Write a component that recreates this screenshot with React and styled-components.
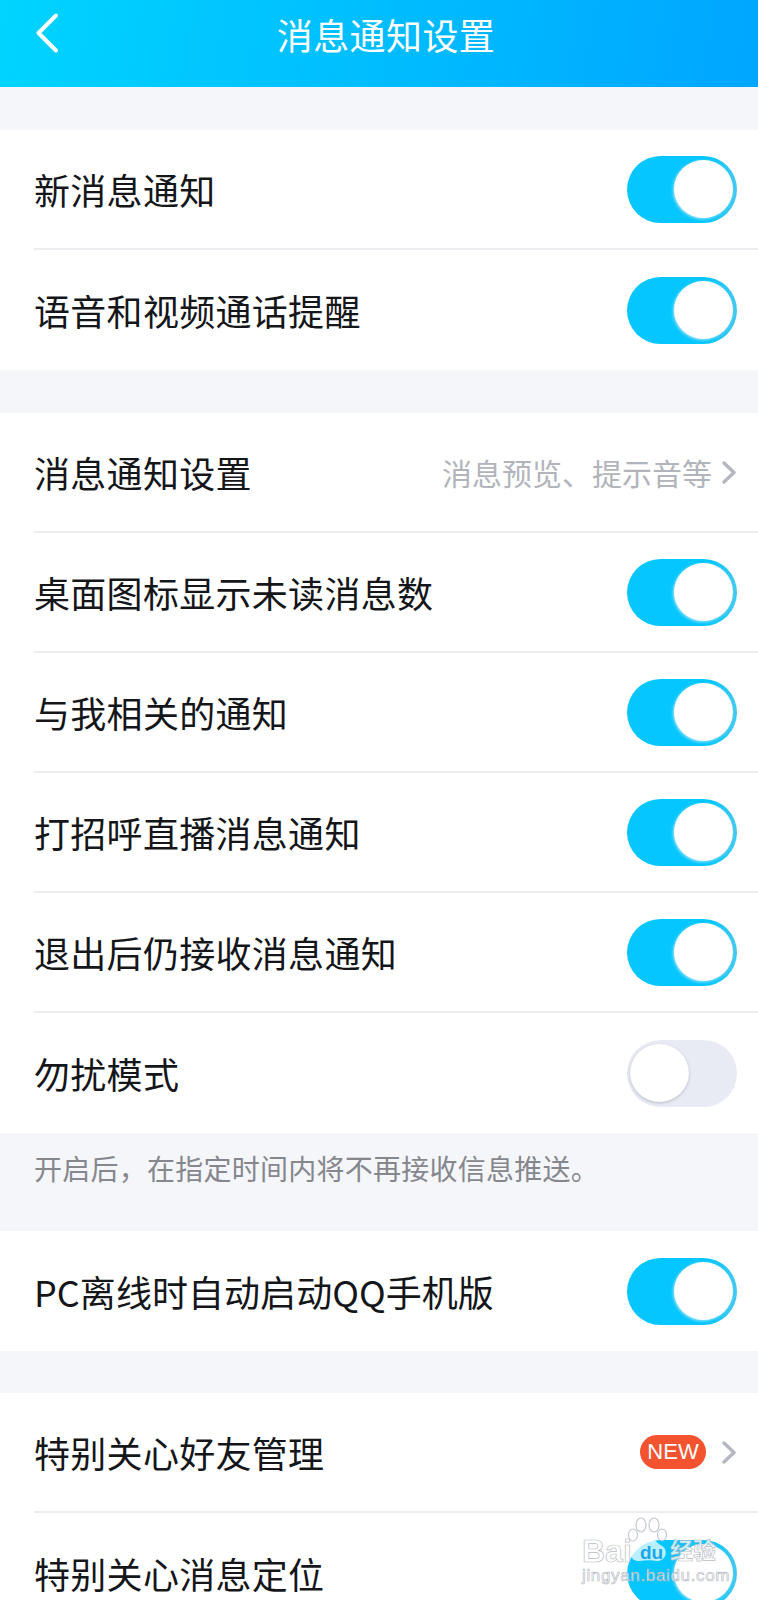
import styled, { createGlobalStyle } from "styled-components";

const GlobalStyle = createGlobalStyle`
  html, body {
    margin: 0;
    padding: 0;
    background: #f4f6fa;
  }
  * {
    box-sizing: border-box;
  }
`;

const Page = styled.div`
  position: relative;
  width: 758px;
  height: 1600px;
  overflow: hidden;
  background: #f4f6fa;
  font-family: "Noto Sans CJK SC", "Noto Sans", sans-serif;
`;
const Header = styled.header`
  position: relative;
  display: flex;
  align-items: center;
  justify-content: center;
  height: 87px;
  padding: 0 0 19px 14px;
  background: linear-gradient(100deg, #00d4ff 0%, #00a6ff 100%);
`;
const BackIcon = styled.svg`
  position: absolute;
  left: 0;
  top: 0;
  width: 90px;
  height: 87px;
`;
const Title = styled.h1`
  margin: 0;
  color: #ffffff;
  font-size: 36px;
  font-weight: 400;
  line-height: 50px;
  letter-spacing: 0.4px;
`;
const Section = styled.section`
  margin-top: ${(props) => props.$top || 43}px;
  padding-left: 34px;
  background: #ffffff;
`;
const Row = styled.div`
  display: flex;
  align-items: center;
  justify-content: space-between;
  height: 120px;
  padding-right: 21px;
  border-bottom: ${(props) => (props.$last ? "none" : "2px solid #ecedf0")};
`;
const Label = styled.span`
  color: #14161a;
  font-size: 36px;
  line-height: 50px;
  letter-spacing: ${(props) => (props.$tight ? 0.05 : 0.3)}px;
`;
const Trail = styled.div`
  display: flex;
  align-items: center;
`;
const Hint = styled.span`
  margin-right: 10px;
  color: #b2b4bb;
  font-size: 30px;
  line-height: 40px;
`;
const Badge = styled.span`
  display: flex;
  align-items: center;
  justify-content: center;
  width: 66px;
  height: 34px;
  margin-right: 16px;
  border-radius: 17px;
  background: #f4532f;
  color: #ffffff;
  font-family: "Liberation Sans", sans-serif;
  font-size: 22px;
`;
const Chevron = styled.svg`
  display: block;
  width: 15px;
  height: 25px;
`;
const Track = styled.div`
  display: flex;
  justify-content: ${(props) => (props.$on ? "flex-end" : "flex-start")};
  align-items: center;
  width: 110px;
  height: 67px;
  padding: ${(props) => (props.$on ? "0 4px 0 0" : "0 0 0 3px")};
  border-radius: 34px;
  background: ${(props) =>
    props.$on
      ? "linear-gradient(90deg, #06c6ff 0%, #06c6ff 75%, #45c8ef 100%)"
      : "#e8ebf4"};
`;
const Knob = styled.div`
  width: 59px;
  height: 58px;
  border-radius: 50%;
  background: #ffffff;
  box-shadow: ${(props) =>
    props.$on
      ? "-1px 1px 3px rgba(200, 235, 248, 0.8)"
      : "0 1px 3px rgba(120, 125, 140, 0.45)"};
`;
const Note = styled.p`
  margin: 0;
  height: 55px;
  padding: 0 34px;
  display: flex;
  align-items: flex-end;
  color: #85878d;
  font-size: 28px;
  line-height: 40px;
  letter-spacing: 0.25px;
`;
const Watermark = styled.div`
  position: absolute;
  left: 580px;
  top: 1516px;
  width: 140px;
  height: 70px;
  color: rgba(255, 255, 255, 0.78);
  -webkit-text-stroke: 0.7px rgba(165, 172, 180, 0.8);
  pointer-events: none;
`;
const Paw = styled.svg`
  position: absolute;
  left: 46px;
  top: 0;
  width: 44px;
  height: 48px;
`;
const MarkBrand = styled.span`
  position: absolute;
  left: 2px;
  top: 21px;
  font-family: "Liberation Sans", sans-serif;
  font-size: 32px;
  font-weight: 700;
  line-height: 28px;
`;
const MarkDu = styled.span`
  position: absolute;
  left: 60px;
  top: 27px;
  color: #1ba6e6;
  -webkit-text-stroke: 0;
  font-family: "Liberation Sans", sans-serif;
  font-size: 19px;
  font-weight: 700;
  line-height: 20px;
`;
const MarkCn = styled.span`
  position: absolute;
  left: 90px;
  top: 20px;
  font-size: 23px;
  font-weight: 700;
  line-height: 26px;
  white-space: nowrap;
`;
const MarkUrl = styled.span`
  position: absolute;
  left: 2px;
  top: 51px;
  font-family: "Liberation Sans", sans-serif;
  font-size: 17px;
  line-height: 18px;
  letter-spacing: 0.65px;
  white-space: nowrap;
`;

const Toggle = ({ on = true }) => (
  <Track $on={on}>
    <Knob $on={on} />
  </Track>
);

const Arrow = () => (
  <Chevron viewBox="0 0 15 25">
    <path
      d="M2 3l10 9.5L2 22"
      fill="none"
      stroke="#b5b7c0"
      strokeWidth="3.4"
      strokeLinecap="round"
      strokeLinejoin="round"
    />
  </Chevron>
);

const SettingRow = ({ label, children, last, tight }) => (
  <Row $last={last}>
    <Label $tight={tight}>{label}</Label>
    <Trail>{children || <Toggle />}</Trail>
  </Row>
);

export default function App() {
  return (
    <Page>
      <GlobalStyle />
      <Header>
        <BackIcon viewBox="0 0 90 87">
          <path
            d="M56 15.5L38.5 33 56 50.5"
            fill="none"
            stroke="#ffffff"
            strokeWidth="4"
            strokeLinecap="round"
            strokeLinejoin="round"
          />
        </BackIcon>
        <Title>消息通知设置</Title>
      </Header>

      <Section>
        <SettingRow label="新消息通知" />
        <SettingRow label="语音和视频通话提醒" last />
      </Section>

      <Section>
        <SettingRow label="消息通知设置">
          <Hint>消息预览、提示音等</Hint>
          <Arrow />
        </SettingRow>
        <SettingRow label="桌面图标显示未读消息数" />
        <SettingRow label="与我相关的通知" />
        <SettingRow label="打招呼直播消息通知" />
        <SettingRow label="退出后仍接收消息通知" />
        <SettingRow label="勿扰模式" last>
          <Toggle on={false} />
        </SettingRow>
      </Section>
      <Note>开启后，在指定时间内将不再接收信息推送。</Note>

      <Section>
        <SettingRow label="PC离线时自动启动QQ手机版" last tight />
      </Section>

      <Section $top={42}>
        <SettingRow label="特别关心好友管理">
          <Badge>NEW</Badge>
          <Arrow />
        </SettingRow>
        <SettingRow label="特别关心消息定位" last />
      </Section>

      <Watermark>
        <Paw viewBox="0 0 44 48">
          <g fill="rgba(255,255,255,0.7)" stroke="rgba(170,178,186,0.7)" strokeWidth="1.2">
            <ellipse cx="7" cy="19" rx="4.5" ry="6" />
            <ellipse cx="15" cy="9" rx="5" ry="7" />
            <ellipse cx="28" cy="9" rx="5" ry="7" />
            <ellipse cx="36" cy="19" rx="4.5" ry="6" />
          </g>
          <path
            d="M21 20c-6 0-8 6-13 10-7 4-4 16 6 15 5-1 12-1 16 0 10 1 13-11 6-15-7-4-9-10-15-10z"
            fill="rgba(255,255,255,0.72)"
          />
        </Paw>
        <MarkBrand>Bai</MarkBrand>
        <MarkDu>du</MarkDu>
        <MarkCn>经验</MarkCn>
        <MarkUrl>jingyan.baidu.com</MarkUrl>
      </Watermark>
    </Page>
  );
}
